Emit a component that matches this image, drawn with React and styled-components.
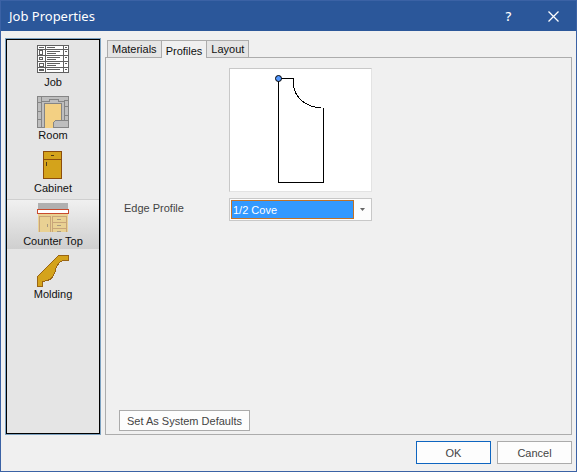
import React, { useState } from "react";
import styled, { createGlobalStyle } from "styled-components";

const GlobalStyle = createGlobalStyle`
  *, *::before, *::after { box-sizing: border-box; }
  html, body, #root { height: 100%; }
  body { margin: 0; font: 11px/14px "Liberation Sans", Arial, sans-serif; color: #111; }
  button, select { font: inherit; color: inherit; margin: 0; }
`;

const Dialog = styled.main`
  display: flex;
  flex-direction: column;
  min-height: 100%;
  background: #f0f0f0;
  border: 1px solid #3b62a5;
`;

const TitleBar = styled.header`
  display: flex;
  align-items: center;
  height: 30px;
  padding: 0 0 0 8px;
  background: #2b579a;
  color: #fff;
`;

const Title = styled.h1`
  flex: 1;
  margin: 0;
  font: 400 13px/16px "Noto Sans", sans-serif;
`;

const TitleButton = styled.button`
  display: grid;
  place-items: center;
  width: 45px;
  height: 30px;
  padding: 0;
  border: 0;
  background: transparent;
  color: #fff;
  font: 500 13px/16px "Noto Sans", sans-serif;
`;

const Body = styled.div`
  display: flex;
  flex: 1;
  gap: 4px;
  padding: 7px 4px 0;
`;

const Sidebar = styled.nav`
  display: flex;
  flex-direction: column;
  gap: 3px;
  width: 96px;
  flex: none;
  background: #e5e5e5;
  border: 2px solid #000;
  outline: 1px solid #7da2c1;
  outline-offset: -1px;
`;

const SideItem = styled.button`
  display: flex;
  flex-direction: column;
  align-items: center;
  height: 50px;
  padding: 3px 0 0;
  border: 0;
  background: ${(p) => (p.$active ? "linear-gradient(#f1f1f1, #cfcfcf)" : "transparent")};
  box-shadow: ${(p) => (p.$active ? "inset 0 1px #cfcfcf" : "none")};
  line-height: 14px;

  svg { flex: none; display: block; }
`;

const Content = styled.section`
  display: flex;
  flex-direction: column;
  flex: 1;
  min-width: 0;
  padding-top: 2px;
`;

const TabBar = styled.div`
  display: flex;
  padding-left: 2px;
`;

const Tab = styled.button`
  height: ${(p) => (p.$active ? "18px" : "17px")};
  margin-bottom: ${(p) => (p.$active ? "-1px" : "0")};
  padding: ${(p) => (p.$active ? "2px 4px 0" : "0 4px")};
  line-height: 14px;
  border: 1px solid #acacac;
  border-bottom: 0;
  background: ${(p) => (p.$active ? "#f0f0f0" : "#e5e5e5")};
  z-index: ${(p) => (p.$active ? 1 : 0)};

  & + & { border-left-width: ${(p) => (p.$active ? "0" : "1px")}; }
  &[aria-selected="true"] + & { border-left-width: 0; }
`;

const Panel = styled.div`
  display: flex;
  flex-direction: column;
  justify-content: space-between;
  flex: 1;
  padding: 10px 13px 3px;
  border: 1px solid #acacac;
`;

const Form = styled.div`
  display: grid;
  grid-template-columns: 95px 143px;
  column-gap: 15px;
  row-gap: 6px;
`;

const Preview = styled.div`
  grid-column: 2;
  height: 124px;
  background: #fff;
  border: 1px solid #c8c8c8;
  border-right-color: #e3e3e3;
  border-bottom-color: #e3e3e3;

  svg { display: block; }
`;

const Label = styled.label`
  padding: 3px 0 0 5px;
  color: #444;
`;

const Combo = styled.div`
  display: flex;
  align-items: center;
  height: 23px;
  padding: 1px;
  background: #fdfdfd;
  border: 1px solid #c8c8c8;

  svg { flex: none; margin-left: 6px; }
`;

const Select = styled.select`
  appearance: none;
  width: 123px;
  height: 19px;
  padding: 0 1px;
  border: 1px solid #c07228;
  border-radius: 0;
  outline: 0;
  background: #3399ff;
  color: #fff;
`;

const Button = styled.button`
  min-width: 75px;
  height: ${(p) => (p.$compact ? "21px" : "23px")};
  padding: 0 7px;
  border: 1px solid ${(p) => (p.$primary ? "#0e65c0" : "#ababab")};
  background: #fdfdfd;
  color: #444;
`;

const PanelActions = styled.div`
  display: flex;
`;

const Footer = styled.footer`
  display: flex;
  justify-content: flex-end;
  gap: 6px;
  padding: 6px 4px 7px;
`;

function JobIcon() {
  return (
    <svg width="32" height="32" viewBox="0 0 32 32" shapeRendering="crispEdges" fill="none" stroke="#606060">
      <rect x=".5" y="2.5" width="31" height="27" fill="#fff" />
      <path d="M0 6.5h32M0 12.5h32M0 18.5h32M0 24.5h32M8.5 2v28M26.5 2v28" />
      <path d="M2 4.5h5M10 4.5h8M28 4.5h2M10 8.5h13M10 10.5h9M28 8.5h2M10 14.5h13M10 16.5h9M28 14.5h2M10 20.5h13M10 22.5h9M28 20.5h2M10 26.5h13M28 26.5h2" />
      <path d="M2.5 7.5h3v4h-3zM2.5 14.5h3v2h-3zM2.5 20.5h4v3h-4zM2.5 26.5h4v1h-4z" />
    </svg>
  );
}

function RoomIcon() {
  return (
    <svg width="32" height="32" viewBox="0 0 32 32" shapeRendering="crispEdges" fill="none" stroke="#858585">
      <rect x=".5" y=".5" width="31" height="31" fill="#bebebe" />
      <path d="M8 8h16v16h-6l-2 2v6H8z" fill="#f3d083" stroke="none" />
      <path d="M4.5 0v32M0 6.5h4M0 15.5h4M0 23.5h4M4 5.5h8v-2h9v2h6.5v19M27 10.5h5M27 19.5h5M27 4.5h5" />
      <path d="M7.5 32V7.5h17v17M31 24.5H18.5l-2 2V32" />
    </svg>
  );
}

function CabinetIcon() {
  return (
    <svg width="32" height="32" viewBox="0 0 32 32" shapeRendering="crispEdges">
      <rect x="6.5" y="2.5" width="18" height="27" fill="#d4a31b" stroke="#8c4d0c" />
      <path d="M6 10.5h19" stroke="#8c4d0c" />
      <path d="M14 6.5h3M9.5 13v4" stroke="#503a18" />
    </svg>
  );
}

function CounterIcon() {
  return (
    <svg width="32" height="32" viewBox="0 0 32 32" shapeRendering="crispEdges">
      <path fill="#b0b0b0" d="M1 1h30v6H1z" />
      <path fill="#fff" stroke="#c94b2e" d="M.5 7.5h31v4H.5z" />
      <path fill="#e9d193" d="M1 12h30v18H1z" />
      <path fill="none" stroke="#c9a579" d="M2.5 30V14.5h11V30M15.5 30V14.5h14V30M15 20.5h15M15 26.5h15" />
      <path stroke="#a89a80" d="M20 17.5h4M20 23.5h4M20 29.5h4M10.5 22v3" />
    </svg>
  );
}

function MoldingIcon() {
  return (
    <svg width="32" height="32" viewBox="0 0 32 32" shapeRendering="crispEdges">
      <path d="M.5 31.5v-10l21-21h10v5h-6l-3 2-3 4-2 7-3 5-4 2-5 1v5z" fill="#d4a31b" stroke="#996515" />
    </svg>
  );
}

function ProfileDrawing() {
  return (
    <svg width="140" height="121" viewBox="0 0 140 121" fill="none" stroke="#000" role="img" aria-label="Cove profile">
      <path shapeRendering="crispEdges" d="M48.5 9.5v104h45V39M48 9.5h15.5v6c1 14 14 23 27 23" />
      <circle cx="48.5" cy="9.5" r="3" fill="#5599ff" />
    </svg>
  );
}

const sections = [
  ["Job", JobIcon],
  ["Room", RoomIcon],
  ["Cabinet", CabinetIcon],
  ["Counter Top", CounterIcon],
  ["Molding", MoldingIcon],
];

export default function App() {
  const [section, setSection] = useState("Counter Top");
  const [tab, setTab] = useState("Profiles");
  return (
    <>
      <GlobalStyle />
      <Dialog aria-label="Job Properties">
        <TitleBar>
          <Title>Job Properties</Title>
          <TitleButton aria-label="Help">?</TitleButton>
          <TitleButton aria-label="Close">
            <svg width="11" height="11" viewBox="0 0 11 11" stroke="#fff" strokeWidth="1.3">
              <path d="M.5.5l10 10M10.5.5l-10 10" />
            </svg>
          </TitleButton>
        </TitleBar>
        <Body>
          <Sidebar aria-label="Sections">
            {sections.map(([name, Icon]) => (
              <SideItem key={name} $active={name === section} onClick={() => setSection(name)}>
                <Icon />
                {name}
              </SideItem>
            ))}
          </Sidebar>
          <Content>
            <TabBar role="tablist">
              {["Materials", "Profiles", "Layout"].map((name) => (
                <Tab key={name} role="tab" aria-selected={name === tab} $active={name === tab} onClick={() => setTab(name)}>
                  {name}
                </Tab>
              ))}
            </TabBar>
            <Panel role="tabpanel">
              <Form>
                <Preview>
                  <ProfileDrawing />
                </Preview>
                <Label htmlFor="edge-profile">Edge Profile</Label>
                <Combo>
                  <Select id="edge-profile" defaultValue="1/2 Cove">
                    <option>1/2 Cove</option>
                  </Select>
                  <svg width="5" height="3" viewBox="0 0 5 3" fill="#666" aria-hidden="true">
                    <path d="M0 0h5L2.5 3z" />
                  </svg>
                </Combo>
              </Form>
              <PanelActions>
                <Button $compact>Set As System Defaults</Button>
              </PanelActions>
            </Panel>
          </Content>
        </Body>
        <Footer>
          <Button $primary>OK</Button>
          <Button>Cancel</Button>
        </Footer>
      </Dialog>
    </>
  );
}
